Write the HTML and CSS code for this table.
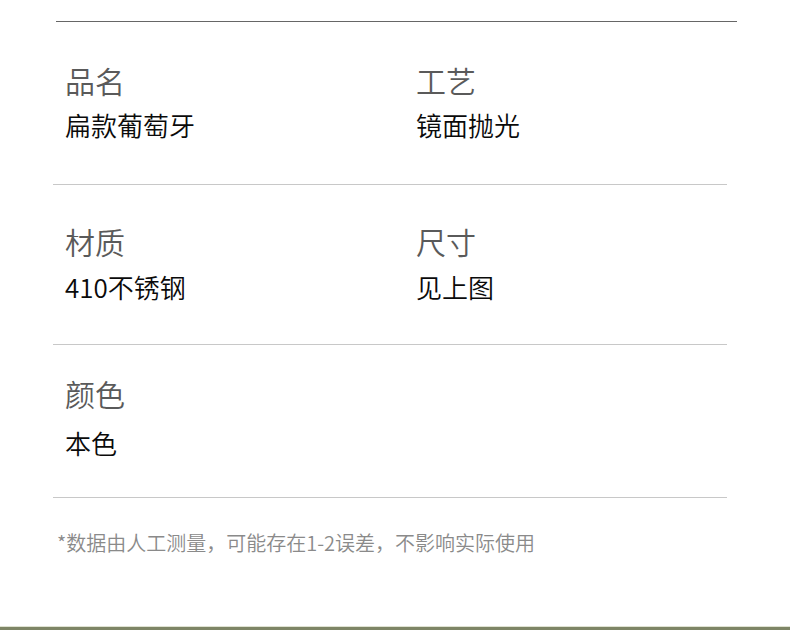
FILE: index.html
```html
<!DOCTYPE html>
<html lang="zh-CN">
<head>
<meta charset="utf-8">
<title>产品参数</title>
<link rel="stylesheet" href="styles.css">
</head>
<body>
<div class="page">
  <div class="top-rule"></div>
  <div class="specs">
    <div class="row row-1">
      <div class="cell">
        <div class="label">品名</div>
        <div class="value">扁款葡萄牙</div>
      </div>
      <div class="cell">
        <div class="label">工艺</div>
        <div class="value">镜面抛光</div>
      </div>
    </div>
    <div class="row row-2">
      <div class="cell">
        <div class="label">材质</div>
        <div class="value">410不锈钢</div>
      </div>
      <div class="cell">
        <div class="label">尺寸</div>
        <div class="value">见上图</div>
      </div>
    </div>
    <div class="row row-3">
      <div class="cell">
        <div class="label">颜色</div>
        <div class="value">本色</div>
      </div>
    </div>
  </div>
  <p class="note">*数据由人工测量，可能存在1-2误差，不影响实际使用</p>
  <div class="bottom-bar"></div>
</div>
</body>
</html>
```

FILE: styles.css
```css
html, body {
  margin: 0;
  padding: 0;
  background: #ffffff;
}

body {
  font-family: "Noto Sans CJK SC", "Noto Sans", sans-serif;
}

.page {
  width: 790px;
  height: 630px;
  overflow: hidden;
  display: flex;
  flex-direction: column;
}

.top-rule {
  margin-top: 21px;
  margin-left: 56px;
  width: 681px;
  height: 1px;
  background: #666666;
  flex: none;
}

.specs {
  margin-left: 53px;
  width: 674px;
}

.row {
  display: grid;
  grid-template-columns: 351px 1fr;
  border-bottom: 1px solid #c8c8c8;
  padding-left: 12px;
}

.row-1 { padding-top: 43px; padding-bottom: 46px; }
.row-2 { padding-top: 41px; padding-bottom: 44px; }
.row-3 { padding-top: 33px; padding-bottom: 41px; }

.cell {
  display: flex;
  flex-direction: column;
}

.label {
  font-size: 30px;
  line-height: 30px;
  color: #5a5a5a;
  font-weight: 350;
}

.value {
  font-size: 26px;
  line-height: 26px;
  color: #0a0a0a;
  font-weight: 350;
}

.row-1 .value { margin-top: 17px; }
.row-2 .value { margin-top: 18px; }
.row-3 .value { margin-top: 22px; }

.note {
  margin: 35px 0 0 57px;
  font-size: 20px;
  line-height: 20px;
  color: #8a8a8a;
  font-weight: 350;
}

.bottom-bar {
  margin-top: auto;
  height: 3px;
  background: #7e8566;
  border-top: 1px solid #dfe2d2;
  flex: none;
}
```
